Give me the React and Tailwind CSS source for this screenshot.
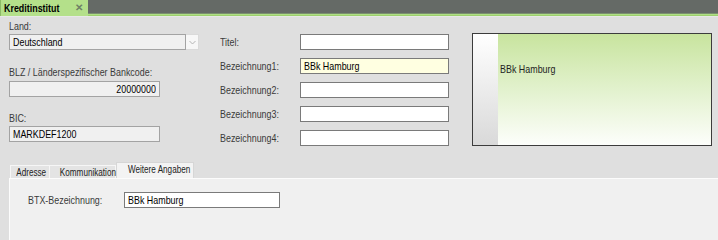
// Text is drawn a bit narrower to mimic the condensed WinForms system font
const T = ({ children, origin = 'origin-left', tight = false }) => (
  <span className={`inline-block ${origin} ${tight ? 'scale-x-[0.74]' : 'scale-x-[0.81]'}`}>{children}</span>
);

const Field = ({ value = '', className = '', align = 'left' }) => (
  <div
    className={`h-4 border border-[#7a7a7a] px-[3px] text-[11px] leading-[14px] text-black whitespace-nowrap overflow-hidden ${
      align === 'right' ? 'text-right' : 'text-left'
    } ${className}`}
  >
    {value && <T origin={align === 'right' ? 'origin-right' : 'origin-left'}>{value}</T>}
  </div>
);

const Label = ({ children, className = '' }) => (
  <div className={`text-[11px] leading-[13px] text-[#3a3a3a] whitespace-nowrap ${className}`}>
    <T>{children}</T>
  </div>
);

const rows = [
  { label: 'Titel:', value: '' },
  { label: 'Bezeichnung1:', value: 'BBk Hamburg', highlight: true },
  { label: 'Bezeichnung2:', value: '' },
  { label: 'Bezeichnung3:', value: '' },
  { label: 'Bezeichnung4:', value: '' },
];

export default function App() {
  return (
    <div className="w-[718px] h-[240px] overflow-hidden bg-[#dfdfdf] font-['Liberation_Sans',Arial,sans-serif] flex flex-col">
      {/* Document tab header */}
      <div className="flex h-4 shrink-0">
        <div className="w-[88px] h-4 bg-[#b4e08a] border-l border-[#8cba66] flex items-center pl-[3px] pr-[5px]">
          <span className="text-[11px] font-bold text-black leading-none">
            <T>Kreditinstitut</T>
          </span>
          <span className="ml-auto text-[10px] font-bold text-[#6e8066] leading-none">✕</span>
        </div>
        <div className="flex-1 flex flex-col">
          <div className="h-[13px] bg-[#656a66]" />
          <div className="h-px bg-[#7b9070]" />
          <div className="h-px bg-[#afdf84]" />
          <div className="h-px bg-[#9dd06e]" />
        </div>
      </div>
      <div className="h-px bg-[#e8e8e8] shrink-0" />

      {/* Upper form area */}
      <div className="flex pl-[9px] pt-[3px] shrink-0">
        {/* Left column */}
        <div className="w-[190px] flex flex-col">
          <Label>Land:</Label>
          <div className="mt-px flex h-4">
            <Field value="Deutschland" className="w-[177px] bg-[#f0f0f0] border-[#a3a3a3]" />
            <div className="w-[13px] h-4 bg-[#f7f7f7] border border-l-0 border-[#dadada] flex items-center justify-center">
              <svg width="7" height="5" viewBox="0 0 7 5" fill="none">
                <path d="M0.5 1 L3.5 4 L6.5 1" stroke="#b5b5b5" strokeWidth="1" />
              </svg>
            </div>
          </div>
          <Label className="mt-[16px]">BLZ / Länderspezifischer Bankcode:</Label>
          <Field value="20000000" align="right" className="mt-[2px] w-[151px] bg-[#f0f0f0] border-[#a3a3a3]" />
          <Label className="mt-[15px]">BIC:</Label>
          <Field value="MARKDEF1200" className="mt-px w-[151px] bg-[#f0f0f0] border-[#a3a3a3]" />
        </div>

        {/* Middle column */}
        <div className="ml-[21px] pt-[14px] flex flex-col gap-2">
          {rows.map((r) => (
            <div key={r.label} className="flex items-center h-4">
              <Label className="w-[80px]">{r.label}</Label>
              <Field value={r.value} className={`w-[149px] ${r.highlight ? 'bg-[#ffffe1]' : 'bg-white'}`} />
            </div>
          ))}
        </div>

        {/* Preview box */}
        <div className="ml-[23px] mt-[13px] w-[240px] h-[113px] border border-[#3c3c3c] flex">
          <div className="w-[25px] bg-gradient-to-b from-[#ffffff] to-[#d9d9d9]" />
          <div className="flex-1 bg-gradient-to-b from-[#c8e49e] to-[#fdfefb] pl-[2px] pt-[29px] text-[11px] leading-[13px] text-[#222]">
            <T>BBk Hamburg</T>
          </div>
        </div>
      </div>

      {/* Tabs */}
      <div className="mt-[16px] flex items-end pl-[10px] h-4 shrink-0 text-[11px] text-[#222]">
        <div className="w-[40px] h-[13px] bg-[#e4e4e4] border border-b-0 border-[#f6f6f6] leading-[12px] text-center whitespace-nowrap">
          <T origin="origin-center" tight>Adresse</T>
        </div>
        <div className="w-[66px] h-[13px] bg-[#e4e4e4] border border-b-0 border-l-0 border-[#f6f6f6] leading-[12px] text-center whitespace-nowrap">
          <T origin="origin-center" tight>Kommunikation</T>
        </div>
        <div className="w-[78px] h-4 bg-[#f3f3f3] border border-b-0 border-[#d6d6d6] leading-[13px] text-center whitespace-nowrap">
          <T origin="origin-center" tight>Weitere Angaben</T>
        </div>
      </div>
      <div className="ml-[9px] flex-1 bg-[#f0f0f0] border-t border-l border-[#fcfcfc] pl-[18px] pt-[13px]">
        <div className="flex items-center h-4">
          <Label className="w-[96px]">BTX-Bezeichnung:</Label>
          <Field value="BBk Hamburg" className="w-[156px] bg-white" />
        </div>
      </div>
    </div>
  );
}
